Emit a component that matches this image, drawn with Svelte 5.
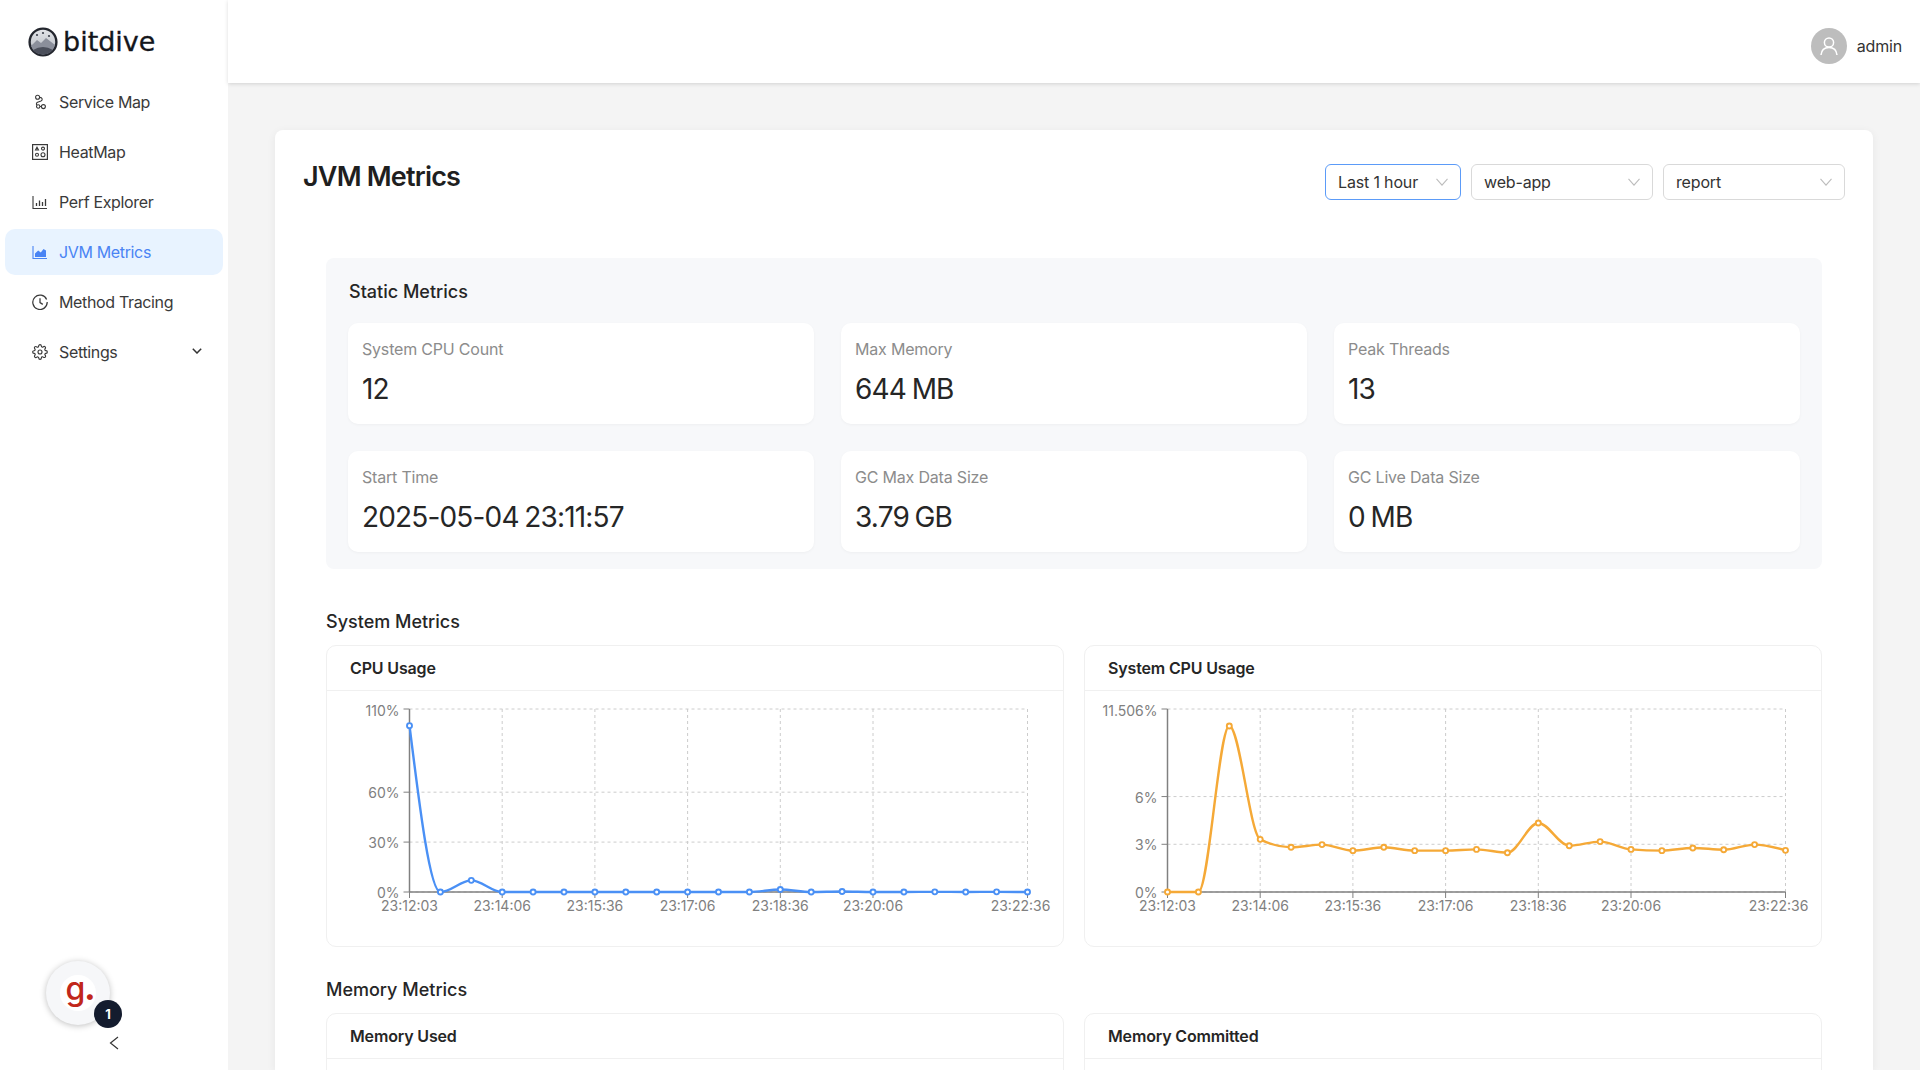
<script>
  const menu = [
    { key: 'map', label: 'Service Map' },
    { key: 'heat', label: 'HeatMap' },
    { key: 'perf', label: 'Perf Explorer' },
    { key: 'jvm', label: 'JVM Metrics', active: true },
    { key: 'trace', label: 'Method Tracing' },
    { key: 'settings', label: 'Settings', more: true }
  ];

  const stats = [
    { label: 'System CPU Count', value: '12' },
    { label: 'Max Memory', value: '644 MB' },
    { label: 'Peak Threads', value: '13' },
    { label: 'Start Time', value: '2025-05-04 23:11:57' },
    { label: 'GC Max Data Size', value: '3.79 GB' },
    { label: 'GC Live Data Size', value: '0 MB' }
  ];

  const filters = [
    { label: 'Last 1 hour', width: 136, focused: true },
    { label: 'web-app', width: 182 },
    { label: 'report', width: 182 }
  ];

  // plot area inside the chart svg
  const X0 = 82.5, X1 = 700.5, Y0 = 18, Y1 = 201;
  const xTicks = [
    [0, '23:12:03'], [3, '23:14:06'], [6, '23:15:36'], [9, '23:17:06'],
    [12, '23:18:36'], [15, '23:20:06'], [20, '23:22:36']
  ];

  const charts = [
    {
      title: 'CPU Usage',
      color: '#4a90f5',
      max: 110,
      yTicks: [[0, '0%'], [30, '30%'], [60, '60%'], [110, '110%']],
      data: [100, 0, 7, 0, 0, 0, 0, 0, 0, 0, 0, 0, 1.5, 0, 0.3, 0, 0, 0.1, 0, 0.1, 0]
    },
    {
      title: 'System CPU Usage',
      color: '#f5a937',
      max: 11.506,
      yTicks: [[0, '0%'], [3, '3%'], [6, '6%'], [11.506, '11.506%']],
      data: [0, 0, 10.44, 3.31, 2.81, 2.98, 2.6, 2.81, 2.6, 2.6, 2.68, 2.47, 4.34, 2.91, 3.17, 2.68, 2.6, 2.77, 2.66, 2.98, 2.62]
    }
  ];

  function px(i) {
    return X0 + (i * (X1 - X0)) / 20;
  }
  function py(v, max) {
    return Y1 - (v / max) * (Y1 - Y0);
  }

  // same curve as d3 curveMonotoneX
  function monotone(pts) {
    const n = pts.length;
    const t = new Array(n).fill(0);
    for (let i = 1; i < n - 1; i++) {
      const h0 = pts[i][0] - pts[i - 1][0], h1 = pts[i + 1][0] - pts[i][0];
      const s0 = (pts[i][1] - pts[i - 1][1]) / h0, s1 = (pts[i + 1][1] - pts[i][1]) / h1;
      const p = (s0 * h1 + s1 * h0) / (h0 + h1);
      t[i] = (Math.sign(s0) + Math.sign(s1)) * Math.min(Math.abs(s0), Math.abs(s1), 0.5 * Math.abs(p)) || 0;
    }
    const h = pts[1][0] - pts[0][0];
    t[0] = ((3 * (pts[1][1] - pts[0][1])) / h - t[1]) / 2;
    t[n - 1] = ((3 * (pts[n - 1][1] - pts[n - 2][1])) / h - t[n - 2]) / 2;
    let d = `M${pts[0][0]},${pts[0][1]}`;
    for (let i = 1; i < n; i++) {
      const dx = (pts[i][0] - pts[i - 1][0]) / 3;
      d += `C${pts[i - 1][0] + dx},${pts[i - 1][1] + dx * t[i - 1]},${pts[i][0] - dx},${pts[i][1] - dx * t[i]},${pts[i][0]},${pts[i][1]}`;
    }
    return d;
  }

  function points(c) {
    return c.data.map((v, i) => [px(i), py(v, c.max)]);
  }

  const memory = ['Memory Used', 'Memory Committed'];
</script>

<div class="shell">
  <aside class="sider">
    <div class="logo">
      <svg width="30" height="30" viewBox="0 0 30 30">
        <defs>
          <linearGradient id="ball" x1="0" y1="0" x2="0" y2="1">
            <stop offset="0" stop-color="#e4e6ea" />
            <stop offset="0.55" stop-color="#c9ccd2" />
            <stop offset="1" stop-color="#6d7280" />
          </linearGradient>
        </defs>
        <circle cx="15" cy="15" r="13.4" fill="url(#ball)" stroke="#23262e" stroke-width="2.4" />
        <path d="M3 19 L9 13 L13 16 L18 11 L27 18 Q24 27 15 27.5 Q6 27 3 19 Z" fill="#8b8f9b" />
        <path d="M5 23 Q15 17 25 23 Q21 27.5 15 27.5 Q9 27.5 5 23 Z" fill="#4b4f5b" />
        <circle cx="9" cy="8" r="1.1" fill="#3b3f4a" />
        <circle cx="15" cy="6" r="1.1" fill="#3b3f4a" />
        <circle cx="21" cy="9" r="1.1" fill="#3b3f4a" />
      </svg>
      <span class="brand">bitdive</span>
    </div>

    <nav class="menu">
      {#each menu as item}
        <div class="item" class:active={item.active}>
          <svg class="icon" width="16" height="16" viewBox="0 0 16 16" fill="none" stroke="currentColor" stroke-width="1.1">
            {#if item.key === 'map'}
              <circle cx="5.6" cy="3.2" r="2" />
              <circle cx="6.2" cy="12.5" r="1.7" />
              <circle cx="11.4" cy="12.6" r="2" />
              <path d="M7.6 3.4c3 .2 3.4 2.6 1.4 3.6L5.6 8.2c-1.6.8-1.4 2.2-.6 3" />
              <path d="M8 12.5h1.4" />
            {:else if item.key === 'heat'}
              <rect x="0.6" y="0.6" width="14.8" height="14.8" stroke-width="1.2" />
              <path d="M5 3.2 6.5 6H3.5Z" />
              <circle cx="11" cy="4.6" r="1.5" />
              <circle cx="5" cy="10.8" r="1.5" />
              <circle cx="11" cy="10.8" r="2" />
            {:else if item.key === 'perf'}
              <path d="M1 2v12.5h14" />
              <path d="M4.5 12V9M7.5 12V6.5M10.5 12V8M13.5 12V5" stroke-width="1.3" />
            {:else if item.key === 'jvm'}
              <path d="M1 2v12.5h14" />
              <path d="M3 13V9.5l3.2-3 2.6 2 2.7-3.5 2.5 1.5V13Z" fill="currentColor" stroke="none" />
            {:else if item.key === 'trace'}
              <path d="M14.6 5.4A7.2 7.2 0 1 0 15.2 8" stroke-width="1.25" />
              <path d="M8 4.2V8.6l2.8 1.8" stroke-width="1.25" />
            {:else}
              <g transform="scale(0.667)" stroke-width="1.7">
                <circle cx="12" cy="12" r="3" />
                <path d="M19.4 15a1.65 1.65 0 0 0 .33 1.82l.06.06a2 2 0 0 1 0 2.83 2 2 0 0 1-2.83 0l-.06-.06a1.65 1.65 0 0 0-1.82-.33 1.65 1.65 0 0 0-1 1.51V21a2 2 0 0 1-2 2 2 2 0 0 1-2-2v-.09A1.65 1.65 0 0 0 9 19.4a1.65 1.65 0 0 0-1.82.33l-.06.06a2 2 0 0 1-2.83 0 2 2 0 0 1 0-2.83l.06-.06a1.65 1.65 0 0 0 .33-1.82 1.65 1.65 0 0 0-1.51-1H3a2 2 0 0 1-2-2 2 2 0 0 1 2-2h.09A1.65 1.65 0 0 0 4.6 9a1.65 1.65 0 0 0-.33-1.82l-.06-.06a2 2 0 0 1 0-2.83 2 2 0 0 1 2.83 0l.06.06a1.65 1.65 0 0 0 1.82.33H9a1.65 1.65 0 0 0 1-1.51V3a2 2 0 0 1 2-2 2 2 0 0 1 2 2v.09a1.65 1.65 0 0 0 1 1.51 1.65 1.65 0 0 0 1.82-.33l.06-.06a2 2 0 0 1 2.83 0 2 2 0 0 1 0 2.83l-.06.06a1.65 1.65 0 0 0-.33 1.82V9a1.65 1.65 0 0 0 1.51 1H21a2 2 0 0 1 2 2 2 2 0 0 1-2 2h-.09a1.65 1.65 0 0 0-1.51 1z" />
              </g>
            {/if}
          </svg>
          <span>{item.label}</span>
          {#if item.more}
            <svg class="more" width="10" height="6" viewBox="0 0 10 6" fill="none" stroke="currentColor" stroke-width="1.5">
              <path d="M.8.8 5 5 9.2.8" />
            </svg>
          {/if}
        </div>
      {/each}
    </nav>

    <div class="collapse">
      <svg width="10" height="14" viewBox="0 0 10 14" fill="none" stroke="#333" stroke-width="1.2">
        <path d="M9 1 1.5 7 9 13" />
      </svg>
    </div>

    <div class="widget">
      <div class="widget-inner"><span class="g">g<span class="dot">.</span></span></div>
      <span class="count">1</span>
    </div>
  </aside>

  <div class="main">
    <header class="topbar">
      <div class="avatar">
        <svg width="22" height="22" viewBox="0 0 22 22" fill="none" stroke="#fff" stroke-width="1.5">
          <circle cx="11" cy="7.5" r="4.6" />
          <path d="M3 20c.4-4.6 3.4-7.6 8-7.6s7.6 3 8 7.6" />
        </svg>
      </div>
      <span class="username">admin</span>
    </header>

    <div class="content">
      <section class="panel">
        <div class="panel-head">
          <h1>JVM Metrics</h1>
          <div class="filters">
            {#each filters as f}
              <div class="select" class:focused={f.focused} style="width: {f.width}px">
                <span>{f.label}</span>
                <svg width="12" height="8" viewBox="0 0 12 8" fill="none" stroke="#bdbdbd" stroke-width="1.1">
                  <path d="M.5.8 6 7.2 11.5.8" />
                </svg>
              </div>
            {/each}
          </div>
        </div>

        <div class="body">
          <div class="static">
            <h2>Static Metrics</h2>
            <div class="stat-grid">
              {#each stats as s}
                <div class="stat">
                  <div class="stat-label">{s.label}</div>
                  <div class="stat-value">{s.value}</div>
                </div>
              {/each}
            </div>
          </div>

          <h2 class="group first">System Metrics</h2>
          <div class="charts">
            {#each charts as c}
              <div class="chart-card">
                <div class="chart-head">{c.title}</div>
                <svg class="plot" width="736" height="255" viewBox="0 0 736 255">
                  {#each c.yTicks as [v]}
                    <line x1={X0} x2={X1} y1={py(v, c.max)} y2={py(v, c.max)} class="grid" />
                  {/each}
                  {#each xTicks as [i]}
                    {#if i > 0}
                      <line x1={px(i)} x2={px(i)} y1={Y0} y2={Y1} class="grid" />
                    {/if}
                  {/each}

                  <line x1={X0} x2={X0} y1={Y0} y2={Y1} class="axis" />
                  <line x1={X0} x2={X1} y1={Y1} y2={Y1} class="axis" />
                  {#each c.yTicks as [v, label]}
                    <line x1={X0 - 6} x2={X0} y1={py(v, c.max)} y2={py(v, c.max)} class="tick" />
                    <text x={X0 - 10} y={py(v, c.max) + (v === c.max ? 7 : 6)} text-anchor="end" class="tick-label">{label}</text>
                  {/each}
                  {#each xTicks as [i, label]}
                    <line x1={px(i)} x2={px(i)} y1={Y1} y2={Y1 + 6} class="tick" />
                    <text x={i === 20 ? px(i) - 7 : px(i)} y={Y1 + 19} text-anchor="middle" class="tick-label">{label}</text>
                  {/each}

                  <path d={monotone(points(c))} fill="none" stroke={c.color} stroke-width="2.4" />
                  {#each points(c) as [x, y]}
                    <circle cx={x} cy={y} r="2.5" fill="#fff" stroke={c.color} stroke-width="1.9" />
                  {/each}
                </svg>
              </div>
            {/each}
          </div>

          <h2 class="group">Memory Metrics</h2>
          <div class="charts">
            {#each memory as title}
              <div class="chart-card">
                <div class="chart-head">{title}</div>
                <div class="plot-empty"></div>
              </div>
            {/each}
          </div>
        </div>
      </section>
    </div>
  </div>
</div>

<style>
  :global(body) {
    margin: 0;
    background: #fff;
    font-family: Inter, 'Liberation Sans', sans-serif;
    color: #262626;
  }

  .shell {
    display: flex;
    width: 1920px;
    height: 1070px;
    overflow: hidden;
  }

  .sider {
    position: relative;
    flex: 0 0 228px;
    display: flex;
    flex-direction: column;
    background: #fff;
  }

  .logo {
    display: flex;
    align-items: center;
    gap: 5px;
    height: 79px;
    padding: 4px 0 0 28px;
    box-sizing: border-box;
  }

  .brand {
    font-family: 'DejaVu Sans', sans-serif;
    font-size: 27px;
    line-height: 1;
    color: #14161c;
    -webkit-text-stroke: 0.3px #14161c;
  }

  .menu {
    display: flex;
    flex-direction: column;
    gap: 4px;
    padding: 0 5px;
  }

  .item {
    display: flex;
    align-items: center;
    gap: 11px;
    height: 46px;
    padding-left: 27px;
    border-radius: 10px;
    font-size: 16px;
    letter-spacing: -0.022em;
    color: #3a3a3a;
  }

  .item.active {
    background: #e8f3ff;
    color: #4a84f4;
  }

  .more {
    margin-left: auto;
    margin-right: 21px;
    margin-top: -2px;
    color: #333;
  }

  .collapse {
    margin-top: auto;
    height: 54px;
    display: flex;
    align-items: center;
    justify-content: center;
  }

  .widget {
    position: absolute;
    left: 46px;
    top: 961px;
    width: 64px;
    height: 64px;
    border-radius: 50%;
    background: #f6f7f9;
    box-shadow: 0 1px 6px rgba(0, 0, 0, 0.25);
    display: flex;
    align-items: center;
    justify-content: center;
  }

  .widget-inner {
    width: 36px;
    height: 36px;
    border-radius: 50%;
    background: #fff;
    display: flex;
    align-items: center;
    justify-content: center;
  }

  .g {
    font-size: 32px;
    font-weight: 500;
    line-height: 1;
    color: #c1271b;
    margin-top: -9px;
    margin-left: 5px;
  }

  .dot {
    font-weight: 800;
    margin-left: -1px;
  }

  .count {
    position: absolute;
    left: 48px;
    top: 39px;
    width: 28px;
    height: 28px;
    border-radius: 50%;
    background: #141c2e;
    color: #fff;
    font-size: 13px;
    font-weight: 700;
    display: flex;
    align-items: center;
    justify-content: center;
  }

  .main {
    flex: 1;
    min-width: 0;
    display: flex;
    flex-direction: column;
    background: #f4f4f4;
    box-shadow: 0 0 4px rgba(0, 0, 0, 0.12);
  }

  .topbar {
    flex: 0 0 83px;
    box-sizing: border-box;
    display: flex;
    align-items: center;
    justify-content: flex-end;
    gap: 10px;
    padding: 9px 18px 0 0;
    background: #fff;
    box-shadow: 0 1px 4px rgba(0, 0, 0, 0.14);
    position: relative;
  }

  .avatar {
    width: 36px;
    height: 36px;
    border-radius: 50%;
    background: #bdbdbd;
    display: flex;
    align-items: center;
    justify-content: center;
  }

  .username {
    font-size: 16px;
    letter-spacing: -0.01em;
    color: #333;
  }

  .content {
    flex: 1;
    min-height: 0;
    padding: 47px 47px 0;
  }

  .panel {
    background: #fff;
    border-radius: 8px 8px 0 0;
    box-shadow: 0 2px 10px rgba(0, 0, 0, 0.06);
    padding: 34px 28px 0;
    height: 100%;
    box-sizing: border-box;
    overflow: hidden;
  }

  .panel-head {
    display: flex;
    justify-content: space-between;
    align-items: flex-start;
    height: 94px;
  }

  h1 {
    margin: -5px 0 0;
    font-size: 27px;
    line-height: 36px;
    font-weight: 600;
    letter-spacing: -0.03em;
    color: #1f1f1f;
  }

  .filters {
    display: flex;
    gap: 10px;
  }

  .select {
    box-sizing: border-box;
    height: 36px;
    display: flex;
    align-items: center;
    justify-content: space-between;
    padding: 0 12px;
    border: 1px solid #d9d9d9;
    border-radius: 6px;
    font-size: 16px;
    letter-spacing: -0.01em;
    color: #333;
  }

  .select.focused {
    border-color: #5b9bf8;
  }

  .body {
    margin: 0 23px;
  }

  .static {
    box-sizing: border-box;
    height: 311px;
    padding: 22px 22px 0;
    background: #f7f8fa;
    border-radius: 8px;
  }

  .static h2 {
    padding-left: 1px;
  }

  h2 {
    margin: 0;
    font-size: 18px;
    line-height: 24px;
    font-weight: 500;
    color: #262626;
  }

  .stat-grid {
    display: grid;
    grid-template-columns: repeat(3, 1fr);
    gap: 27px;
    margin-top: 19px;
  }

  .stat {
    box-sizing: border-box;
    height: 101px;
    padding: 15px 14px 0;
    background: #fff;
    border-radius: 10px;
    box-shadow: 0 1px 3px rgba(0, 0, 0, 0.04);
  }

  .stat-label {
    font-size: 16px;
    line-height: 22px;
    letter-spacing: -0.012em;
    color: #8c8c8c;
  }

  .stat-value {
    margin-top: 11px;
    font-size: 28px;
    line-height: 36px;
    letter-spacing: -0.03em;
    word-spacing: -0.05em;
    color: #262626;
  }

  .group {
    margin-top: 31px;
    margin-bottom: 11px;
  }

  .group.first {
    margin-top: 41px;
    margin-bottom: 11px;
  }

  .charts {
    display: grid;
    grid-template-columns: 738px 738px;
    gap: 20px;
  }

  .chart-card {
    border: 1px solid #f0f0f0;
    border-radius: 10px;
    background: #fff;
  }

  .chart-head {
    box-sizing: border-box;
    height: 45px;
    padding: 0 23px;
    display: flex;
    align-items: center;
    font-size: 16px;
    font-weight: 600;
    letter-spacing: -0.01em;
    color: #262626;
    border-bottom: 1px solid #f0f0f0;
  }

  .plot {
    display: block;
  }

  .plot-empty {
    height: 255px;
  }

  .grid {
    stroke: #ccc;
    stroke-dasharray: 3 3;
  }

  .axis {
    stroke: #808080;
    stroke-width: 1.5;
  }

  .tick {
    stroke: #808080;
  }

  .tick-label {
    font-size: 14px;
    fill: #808080;
  }
</style>
